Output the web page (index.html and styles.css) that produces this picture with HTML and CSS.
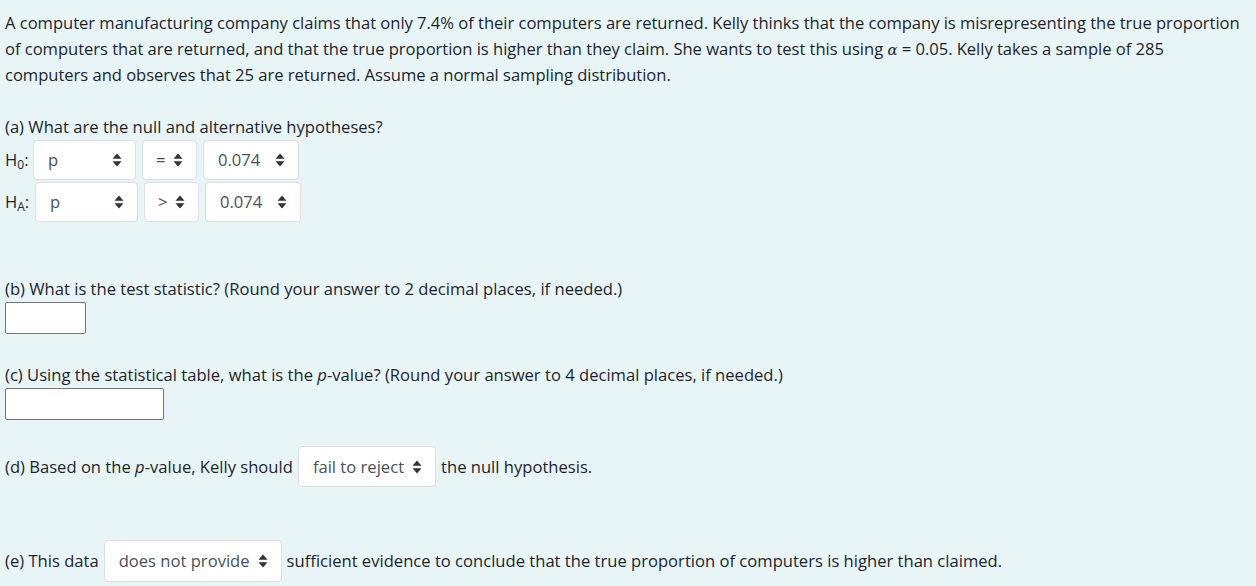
FILE: index.html
```html
<!DOCTYPE html>
<html>
<head>
<meta charset="utf-8">
<link rel="stylesheet" href="styles.css">
</head>
<body>
<div class="page">
  <p class="intro">A computer manufacturing company claims that only 7.4% of their computers are returned. Kelly thinks that the company is misrepresenting the true proportion<br>of computers that are returned, and that the true proportion is higher than they claim. She wants to test this using <i class="alpha">α</i> = 0.05. Kelly takes a sample of 285<br>computers and observes that 25 are returned. Assume a normal sampling distribution.</p>

  <p class="q qa">(a) What are the null and alternative hypotheses?</p>
  <div class="hyp">
    <div class="hrow">
      <span class="hlabel">H<sub>0</sub>:</span>
      <span class="sel s1"><span class="val">p</span><svg class="arr" viewBox="0 0 10 14" width="10" height="14"><path d="M5 0.5 L9.5 5.8 L0.5 5.8 Z M5 13.5 L9.5 8.2 L0.5 8.2 Z" fill="#333"/></svg></span>
      <span class="sel s2"><span class="val">=</span><svg class="arr" viewBox="0 0 10 14" width="10" height="14"><path d="M5 0.5 L9.5 5.8 L0.5 5.8 Z M5 13.5 L9.5 8.2 L0.5 8.2 Z" fill="#333"/></svg></span>
      <span class="sel s3"><span class="val">0.074</span><svg class="arr" viewBox="0 0 10 14" width="10" height="14"><path d="M5 0.5 L9.5 5.8 L0.5 5.8 Z M5 13.5 L9.5 8.2 L0.5 8.2 Z" fill="#333"/></svg></span>
    </div>
    <div class="hrow">
      <span class="hlabel ha">H<sub>A</sub>:</span>
      <span class="sel s1"><span class="val">p</span><svg class="arr" viewBox="0 0 10 14" width="10" height="14"><path d="M5 0.5 L9.5 5.8 L0.5 5.8 Z M5 13.5 L9.5 8.2 L0.5 8.2 Z" fill="#333"/></svg></span>
      <span class="sel s2"><span class="val">&gt;</span><svg class="arr" viewBox="0 0 10 14" width="10" height="14"><path d="M5 0.5 L9.5 5.8 L0.5 5.8 Z M5 13.5 L9.5 8.2 L0.5 8.2 Z" fill="#333"/></svg></span>
      <span class="sel s3"><span class="val">0.074</span><svg class="arr" viewBox="0 0 10 14" width="10" height="14"><path d="M5 0.5 L9.5 5.8 L0.5 5.8 Z M5 13.5 L9.5 8.2 L0.5 8.2 Z" fill="#333"/></svg></span>
    </div>
  </div>

  <p class="q qb">(b) What is the test statistic? (Round your answer to 2 decimal places, if needed.)</p>
  <div class="inp ib"></div>

  <p class="q qc">(c) Using the statistical table, what is the <i>p</i>-value? (Round your answer to 4 decimal places, if needed.)</p>
  <div class="inp ic"></div>

  <div class="line ld">
    <span>(d) Based on the <i>p</i>-value, Kelly should</span>
    <span class="sel sd"><span class="val">fail to reject</span><svg class="arr" viewBox="0 0 10 14" width="10" height="14"><path d="M5 0.5 L9.5 5.8 L0.5 5.8 Z M5 13.5 L9.5 8.2 L0.5 8.2 Z" fill="#333"/></svg></span>
    <span>the null hypothesis.</span>
  </div>

  <div class="line le">
    <span>(e) This data</span>
    <span class="sel se"><span class="val">does not provide</span><svg class="arr" viewBox="0 0 10 14" width="10" height="14"><path d="M5 0.5 L9.5 5.8 L0.5 5.8 Z M5 13.5 L9.5 8.2 L0.5 8.2 Z" fill="#333"/></svg></span>
    <span>sufficient evidence to conclude that the true proportion of computers is higher than claimed.</span>
  </div>
</div>
</body>
</html>
```
FILE: styles.css
```css
html, body {
  margin: 0;
  padding: 0;
  background: #e7f5f7;
}
body {
  font-family: "Open Sans", "Noto Sans", "Liberation Sans", sans-serif;
  font-size: 16.6px;
  line-height: 26px;
  color: #1f1f2b;
}
.page {
  padding: 10px 5px 0 5px;
  display: flex;
  flex-direction: column;
  align-items: flex-start;
}
p { margin: 0; }
.intro {
  white-space: nowrap;
  letter-spacing: -0.04px;
}
.alpha {
  font-family: "DejaVu Serif", serif;
  font-style: italic;
  font-size: 15px;
  line-height: 1;
}
.qa { margin-top: 26px; }
.hyp {
  display: flex;
  flex-direction: column;
  gap: 2px;
}
.hrow {
  display: flex;
  align-items: center;
  gap: 6px;
  height: 40px;
}
.hlabel {
  width: 22px;
}
.hlabel.ha { width: 24px; }
.hlabel sub {
  font-size: 12px;
  vertical-align: -3px;
  line-height: 0;
}
.sel {
  display: inline-flex;
  align-items: center;
  justify-content: space-between;
  box-sizing: border-box;
  height: 40px;
  background: #fff;
  border: 1px solid #dcdfe3;
  border-radius: 4px;
  padding: 0 13px 0 14px;
  color: #495057;
}
.sel .arr { flex: none; }
.s1 { width: 103px; }
.s2 { width: 55px; padding-left: 13px; }
.s3 { width: 96px; }
.sd { height: 41px; gap: 8px; }
.se { height: 42px; gap: 8px; }
.qb { margin-top: 54px; }
.inp {
  box-sizing: border-box;
  height: 32px;
  background: #fff;
  border: 1px solid #767676;
  border-radius: 2px;
}
.ib { width: 81px; }
.ic { width: 159px; }
.qc { margin-top: 28px; }
.line {
  display: flex;
  align-items: center;
  gap: 5px;
}
.ld { margin-top: 26px; }
.le { margin-top: 53px; }
```
